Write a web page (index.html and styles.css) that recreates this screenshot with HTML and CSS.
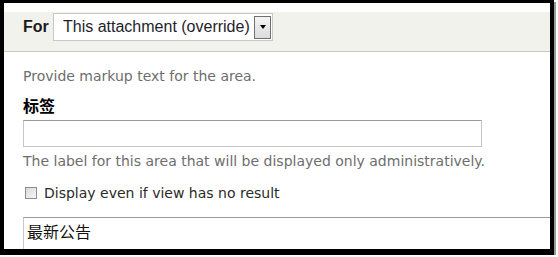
FILE: index.html
```html
<!DOCTYPE html>
<html>
<head>
<meta charset="utf-8">
<link rel="stylesheet" href="styles.css">
</head>
<body>
<div class="frame">
  <div class="inner">
    <div class="header">
      <span class="for-label">For</span>
      <div class="select">
        <span class="select-text">This attachment (override)</span>
        <span class="select-btn"><span class="arrow"></span></span>
      </div>
    </div>
    <div class="content">
      <div class="desc first">Provide markup text for the area.</div>
      <div class="field-label">标签</div>
      <div class="text-input"></div>
      <div class="desc second">The label for this area that will be displayed only administratively.</div>
      <div class="check-row">
        <span class="checkbox"></span>
        <span class="check-label">Display even if view has no result</span>
      </div>
      <div class="textarea">最新公告</div>
    </div>
  </div>
</div>
</body>
</html>
```
FILE: styles.css
```css
html, body {
  margin: 0;
  padding: 0;
  background: #fff;
}
.frame {
  width: 546px;
  height: 246px;
  border-style: solid;
  border-color: #000;
  border-width: 3px 4px 6px 4px;
  box-shadow: 2px 2px 0 #9a9a9a;
  overflow: hidden;
}
.inner {
  width: 100%;
  height: 100%;
  background: #fff;
  padding-top: 9px;
  box-sizing: border-box;
}
.header {
  background: #f2f2ec;
  border-bottom: 1px solid #cacac4;
  height: 40px;
  box-sizing: border-box;
  padding: 1px 0 0 19px;
  display: flex;
  align-items: flex-start;
}
.for-label {
  font-family: "Liberation Sans", Arial, sans-serif;
  font-weight: bold;
  font-size: 16px;
  color: #1a1a1a;
  margin-top: 5px;
  width: 30px;
}
.select {
  width: 220px;
  height: 28px;
  border: 1px solid #c8c8c8;
  background: #fff;
  box-sizing: border-box;
  display: flex;
  align-items: center;
  padding-left: 9px;
}
.select-text {
  font-family: "Liberation Sans", Arial, sans-serif;
  font-size: 16px;
  color: #1e1e2a;
  flex: 1;
  white-space: nowrap;
}
.select-btn {
  width: 17px;
  height: 23px;
  box-sizing: border-box;
  border: 1px solid #707070;
  background: linear-gradient(#f4f4f4, #dcdcdc);
  margin-right: 1px;
  display: flex;
  align-items: center;
  justify-content: center;
}
.arrow {
  width: 0;
  height: 0;
  border-left: 3.5px solid transparent;
  border-right: 3.5px solid transparent;
  border-top: 4px solid #000;
}
.content {
  padding-left: 19px;
  font-family: "DejaVu Sans", Verdana, sans-serif;
}
.desc {
  font-size: 14px;
  line-height: 18px;
  color: #6e6e6e;
  white-space: nowrap;
}
.desc.first {
  margin-top: 15px;
}
.desc.second {
  margin-top: 5px;
}
.field-label {
  font-family: "Noto Sans CJK SC", sans-serif;
  font-weight: bold;
  font-size: 16px;
  line-height: 20px;
  color: #000;
  margin-top: 10px;
}
.text-input {
  width: 459px;
  height: 27px;
  box-sizing: border-box;
  border: 1px solid #c6c6c6;
  border-top-color: #9a9a9a;
  margin-top: 5px;
}
.check-row {
  display: flex;
  align-items: center;
  margin-top: 14px;
}
.checkbox {
  width: 12px;
  height: 12px;
  box-sizing: border-box;
  border: 1px solid #8e8e8e;
  background: linear-gradient(135deg, #dadada, #f6f6f6);
  margin-left: 2px;
  margin-right: 7px;
}
.check-label {
  font-size: 14px;
  color: #2a2a2a;
  line-height: 18px;
}
.textarea {
  margin-top: 15px;
  width: 600px;
  height: 40px;
  box-sizing: border-box;
  border-top: 1px solid #9a9a9a;
  border-left: 1px solid #c6c6c6;
  padding: 3px 0 0 3px;
  font-family: "Noto Sans CJK SC", sans-serif;
  font-size: 16px;
  line-height: 20px;
  color: #111;
}
```
